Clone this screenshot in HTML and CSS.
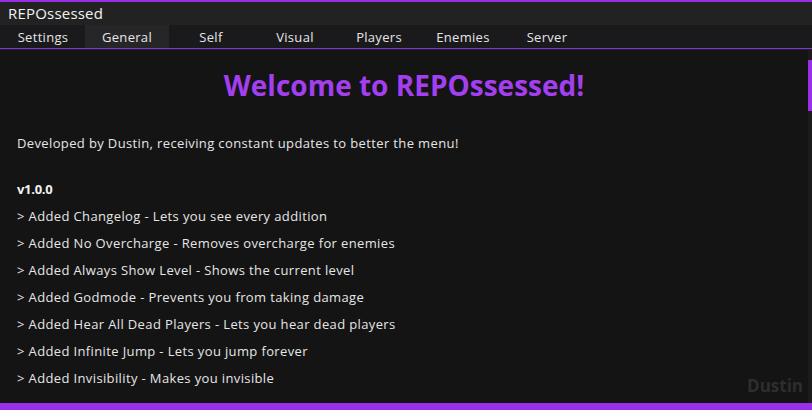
FILE: index.html
```html
<!DOCTYPE html>
<html lang="en">
<head>
  <meta charset="UTF-8" />
  <title>REPOssessed</title>
  <link rel="stylesheet" href="styles.css">
</head>
<body>
  <div class="window">
    <div class="titlebar">REPOssessed</div>
    <div class="tabs">
      <div class="tab">Settings</div>
      <div class="tab active">General</div>
      <div class="tab">Self</div>
      <div class="tab">Visual</div>
      <div class="tab">Players</div>
      <div class="tab">Enemies</div>
      <div class="tab">Server</div>
    </div>
    <div class="content">
      <div class="scroll">
        <h1>Welcome to REPOssessed!</h1>
        <p class="intro">Developed by Dustin, receiving constant updates to better the menu!</p>
        <h2>v1.0.0</h2>
        <ul class="changes">
          <li>&gt; Added Changelog - Lets you see every addition</li>
          <li>&gt; Added No Overcharge - Removes overcharge for enemies</li>
          <li>&gt; Added Always Show Level - Shows the current level</li>
          <li>&gt; Added Godmode - Prevents you from taking damage</li>
          <li>&gt; Added Hear All Dead Players - Lets you hear dead players</li>
          <li>&gt; Added Infinite Jump - Lets you jump forever</li>
          <li>&gt; Added Invisibility - Makes you invisible</li>
        </ul>
      </div>
      <div class="scrollbar"><div class="thumb"></div></div>
      <div class="watermark">Dustin</div>
    </div>
  </div>
</body>
</html>
```

FILE: styles.css
```css
body {
  margin: 0;
  background: #141414;
  font-family: "Open Sans", sans-serif;
  color: #e6e6e6;
}
.window {
  height: 410px;
  display: flex;
  flex-direction: column;
  border-top: 2px solid #9a2fe8;
  border-bottom: 7px solid #9a2fe8;
  box-sizing: border-box;
}
.titlebar {
  height: 23px;
  background: #222222;
  color: #f2f2f2;
  font-size: 15px;
  line-height: 22px;
  padding-left: 8px;
  letter-spacing: 0.2px;
}
.tabs {
  display: flex;
  height: 23px;
  padding-left: 1px;
  background: #1a1a1c;
  border-bottom: 1px solid #7a3fc9;
  box-shadow: 0 1px 0 #2a1a3a;
}
.tab {
  width: 84px;
  text-align: center;
  font-size: 13px;
  line-height: 25px;
  color: #e6e6e6;
  letter-spacing: 0.3px;
}
.tab.active {
  background: #262628;
}
.content {
  flex: 1;
  position: relative;
  display: flex;
  overflow: hidden;
  margin-top: 1px;
}
.scroll {
  flex: 1;
  padding: 0 17px;
  letter-spacing: 0.37px;
}
h1 {
  margin: 15px 0 0;
  text-align: center;
  font-size: 28px;
  font-weight: 700;
  color: #a33ff0;
  line-height: 40px;
  letter-spacing: 0;
}
.intro {
  margin: 28px 0 0;
  font-size: 13px;
  line-height: 20px;
}
h2 {
  margin: 26px 0 0;
  font-size: 13px;
  font-weight: 700;
  line-height: 20px;
  color: #f2f2f2;
  letter-spacing: -0.3px;
}
.changes {
  list-style: none;
  margin: 7px 0 0;
  padding: 0;
  font-size: 13px;
}
.changes li {
  line-height: 20px;
  margin-bottom: 7px;
}
.scrollbar {
  width: 4px;
  background: #1b1b1b;
}
.thumb {
  margin-top: 10px;
  height: 51px;
  background: #9a2fe8;
}
.watermark {
  position: absolute;
  right: 9px;
  bottom: 6px;
  font-size: 17px;
  font-weight: 700;
  color: #2e2e2e;
}
```
